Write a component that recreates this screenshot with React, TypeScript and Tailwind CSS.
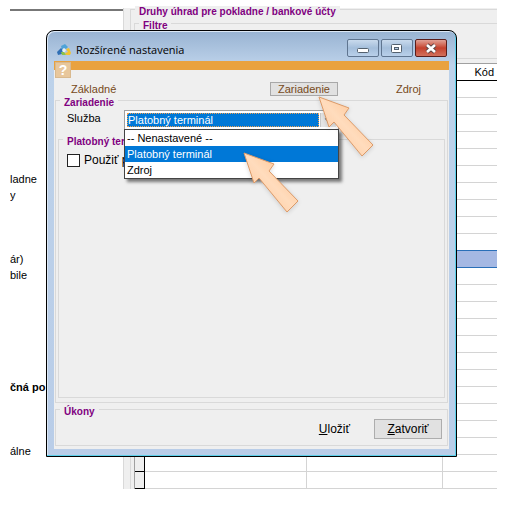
import type { ReactNode } from "react"

const listItems = ["", "", "", "", "", "", "", "", "", "", "ladne", "y", "", "", "", "ár)", "bile", "", "", "", "", "", "", "čná po", "", "", "", "álne"]

const services = ["-- Nenastavené --", "Platobný terminál", "Zdroj"]

const rows = Array.from({ length: 24 }, (_, i) => i)
const selectedRow = 10

function Group({ title, className, children }: { title: string; className?: string; children?: ReactNode }) {
  return (
    <fieldset className={`relative border border-[#d9d9d9] ${className ?? ""}`}>
      <legend className="absolute -top-1 left-1 bg-[#efefef] px-1 text-[10px] leading-3 font-bold whitespace-nowrap text-[#800080]">
        {title}
      </legend>
      {children}
    </fieldset>
  )
}

function Pointer({ className }: { className: string }) {
  return (
    <svg className={`pointer-events-none absolute z-20 drop-shadow-sm ${className}`} width="57" height="63" viewBox="0 0 57 63" aria-hidden="true">
      <defs>
        <linearGradient id="pointerFill" x1="0" y1="1" x2="1" y2="0">
          <stop offset="0" stopColor="#ffc08c" />
          <stop offset="0.5" stopColor="#ffdcbd" />
          <stop offset="1" stopColor="#ffb97e" />
        </linearGradient>
      </defs>
      <path d="M1 2 L31 13 L26 20 L55 50 L44 61 L16 27 L11 32 Z" fill="url(#pointerFill)" stroke="#dc9a68" strokeWidth="1" strokeLinejoin="round" />
    </svg>
  )
}

function AppIcon() {
  return (
    <svg className="ml-[3px]" width="15" height="14" viewBox="0 0 15 14" aria-hidden="true">
      <path d="M4 3 L8 1 L11 4 L9 6 L7 5 L5 7 Z" fill="#4fa3d8" />
      <path d="M0 9 L4 5 L6 7 L5 11 L1 12 Z" fill="#2f6fb5" />
      <path d="M9 6 L12 5 L14 10 L13 12 L9 12 L8 10 L11 9 Z" fill="#f2c230" />
      <path d="M4 9 L7 9 L9 12 L5 12 Z" fill="#8cc24a" />
      <path d="M5 7 L7 5 L9 7 L8 9 L6 9 Z" fill="#e6f1f4" />
    </svg>
  )
}

function TitleBar() {
  return (
    <header className="flex h-[30px] items-center">
      <div className="flex flex-1 items-center gap-1 pt-2">
        <AppIcon />
        <h1 className="font-['Open_Sans',sans-serif] text-[11px] leading-4">Rozšírené nastavenia</h1>
      </div>
      <div className="mr-0.5 flex gap-0.5 pt-1">
        <button aria-label="Minimalizovať" className="flex h-[18px] w-8 items-center justify-center rounded-xs border border-[#5f7590] bg-linear-to-b from-[#c9daed] via-[#a4bedb] to-[#b9d0ea]">
          <svg width="12" height="12" viewBox="0 0 12 12">
            <rect x="0.5" y="6.5" width="11" height="4" rx="1" fill="#fff" stroke="#53606e" />
          </svg>
        </button>
        <button aria-label="Maximalizovať" className="flex h-[18px] w-8 items-center justify-center rounded-xs border border-[#5f7590] bg-linear-to-b from-[#c9daed] via-[#a4bedb] to-[#b9d0ea]">
          <svg width="12" height="12" viewBox="0 0 12 12">
            <rect x="0.5" y="2.5" width="10" height="8" rx="1" fill="#fff" stroke="#53606e" />
            <rect x="3.500" y="5.5" width="4" height="2" fill="#b8cde4" stroke="#53606e" />
          </svg>
        </button>
        <button aria-label="Zavrieť" className="flex h-[18px] w-8 items-center justify-center rounded-xs border border-[#5a1d1a] bg-linear-to-b from-[#e0a095] via-[#c4402c] to-[#d2705c]">
          <svg width="12" height="12" viewBox="0 0 12 12">
            <path d="M2 3 L10 10 M10 3 L2 10" stroke="#5d4545" strokeWidth="4.500" />
            <path d="M2 3 L10 10 M10 3 L2 10" stroke="#fff" strokeWidth="2.600" />
          </svg>
        </button>
      </div>
    </header>
  )
}

function ServiceSelect() {
  return (
    <div className="relative w-[215px]">
      <div className="flex h-5 border border-[#a0a0a0] bg-white p-0.5">
        <select
          id="service"
          defaultValue="Platobný terminál"
          className="min-w-0 flex-1 appearance-none border border-dotted border-[#f0a050] bg-[#0078d7] text-[11px] leading-3 text-white outline-none"
        >
          {services.map((s) => (
            <option key={s}>{s}</option>
          ))}
        </select>
        <svg className="ml-px h-full w-4 border-l border-[#c8c8c8] bg-[#e5e5e5]" viewBox="0 0 16 15" aria-hidden="true">
          <path d="M4 6 L11 6 L7.500 10 Z" fill="#333" />
        </svg>
      </div>
      <ul className="absolute top-[19px] left-0 z-10 w-full border border-[#444] bg-white text-[11px] leading-4 shadow-[3px_3px_3px_rgba(0,0,0,0.5)]">
        {services.map((s) => (
          <li key={s} className={s === "Platobný terminál" ? "bg-[#0078d7] px-0.5 text-white" : "px-0.5"}>
            {s}
          </li>
        ))}
      </ul>
    </div>
  )
}

function SettingsDialog() {
  return (
    <section className="absolute top-[30px] right-[51px] left-[46px] rounded-t-lg border border-black bg-linear-to-b from-[#98b3d2] via-[#bdd2ea] via-8% to-[#b9cde8] px-[7px] pb-[7px] shadow-[inset_-1px_-1px_0_#5cd0ea,inset_1px_1px_0_#dce8f5]">
      <TitleBar />
      <div className="bg-[#efefef] px-px pb-[3px]">
        <div className="-mx-px h-[9px] bg-[#e9a23f] pt-px pl-px">
          <button aria-label="Pomocník" className="flex h-4 w-4 items-center justify-center border border-[#d9b98e] bg-[#e8c79c] text-sm leading-4 font-bold text-white">
            ?
          </button>
        </div>
        <nav className="flex pt-3 pr-[27px] pb-1 pl-4 text-[11px] leading-[14px] text-[#774a20]">
          <button className="w-[199px] text-left">Základné</button>
          <button className="w-[68px] border border-[#a8a8a8] bg-[#e1e1e1] leading-3">Zariadenie</button>
          <button className="ml-auto">Zdroj</button>
        </nav>
        <Group title="Zariadenie" className="px-0.5 pt-[9px] pb-1">
          <div className="flex pl-[9px]">
            <label htmlFor="service" className="w-[57px] text-[11px] leading-4">Služba</label>
            <ServiceSelect />
          </div>
          <Group title="Platobný ter" className="mt-[9px] min-h-[259px] px-2 pt-3">
            <label className="flex items-center gap-1 text-xs leading-4">
              <input type="checkbox" className="h-[13px] w-[13px] appearance-none border border-[#222] bg-white" />
              Použiť p
            </label>
          </Group>
        </Group>
        <Group title="Úkony" className="mt-1.5 flex justify-end gap-6 px-[5px] pt-[9px] pb-1.5 text-xs">
          <button className="leading-5"><u>U</u>ložiť</button>
          <button className="h-5 w-[68px] border border-[#adadad] bg-[#e1e1e1]"><u>Z</u>atvoriť</button>
        </Group>
      </div>
    </section>
  )
}

export default function App() {
  return (
    <div className="bg-white font-['Liberation_Sans',Arial,sans-serif] text-black">
      <main className="relative flex pt-2 pr-[11px] pb-4 pl-2.5">
        <aside className="w-[113px] shrink-0 pt-px">
          <ul className="overflow-hidden border-t-2 border-[#777] text-[11px] leading-4">
            {listItems.map((item, i) => (
              <li key={i} className={item === "čná po" ? "h-4 font-bold whitespace-nowrap" : "h-4 whitespace-nowrap"}>
                {item}
              </li>
            ))}
          </ul>
        </aside>

        <div className="min-w-0 flex-1 border-l border-[#d9d9d9] bg-[#efefef] pt-px pl-1.5">
          <Group title="Druhy úhrad pre pokladne / bankové účty" className="border-r-0 border-b-0 pt-[13px] pl-[3px]">
            <Group title="Filtre" className="mb-1 h-9 border-r-0" />
            <table className="w-full table-fixed border-separate border-spacing-0 border-t border-l border-[#a0a0a0] bg-white text-[11px] leading-3">
              <thead>
                <tr>
                  <th className="h-[17px] w-[10px] border-r border-b border-black bg-[#efefef] p-0" />
                  <th className="w-[162px] border-b border-black p-0" />
                  <th className="w-[136px] border-b border-black p-0" />
                  <th className="border-b border-black p-0 pr-[3px] text-right font-normal">Kód</th>
                </tr>
              </thead>
              <tbody>
                {rows.map((row) => {
                  const line = row === selectedRow || row === selectedRow - 1 ? "border-[#2a6fb8]" : "border-[#d4d4d4]"
                  const fill = row === selectedRow ? "bg-[#a5b8e3]" : "bg-white"
                  return (
                    <tr key={row} className={fill}>
                      <td className="h-[17px] border-r border-b border-black bg-[#efefef] p-0" />
                      <td className={`border-r border-b p-0 ${line}`} />
                      <td className={`border-r border-b p-0 ${line}`} />
                      <td className={`border-b p-0 ${line}`} />
                    </tr>
                  )
                })}
              </tbody>
            </table>
          </Group>
        </div>

        <SettingsDialog />
        <Pointer className="top-[95px] left-[318px]" />
        <Pointer className="top-[151px] left-[243px]" />
      </main>
    </div>
  )
}
